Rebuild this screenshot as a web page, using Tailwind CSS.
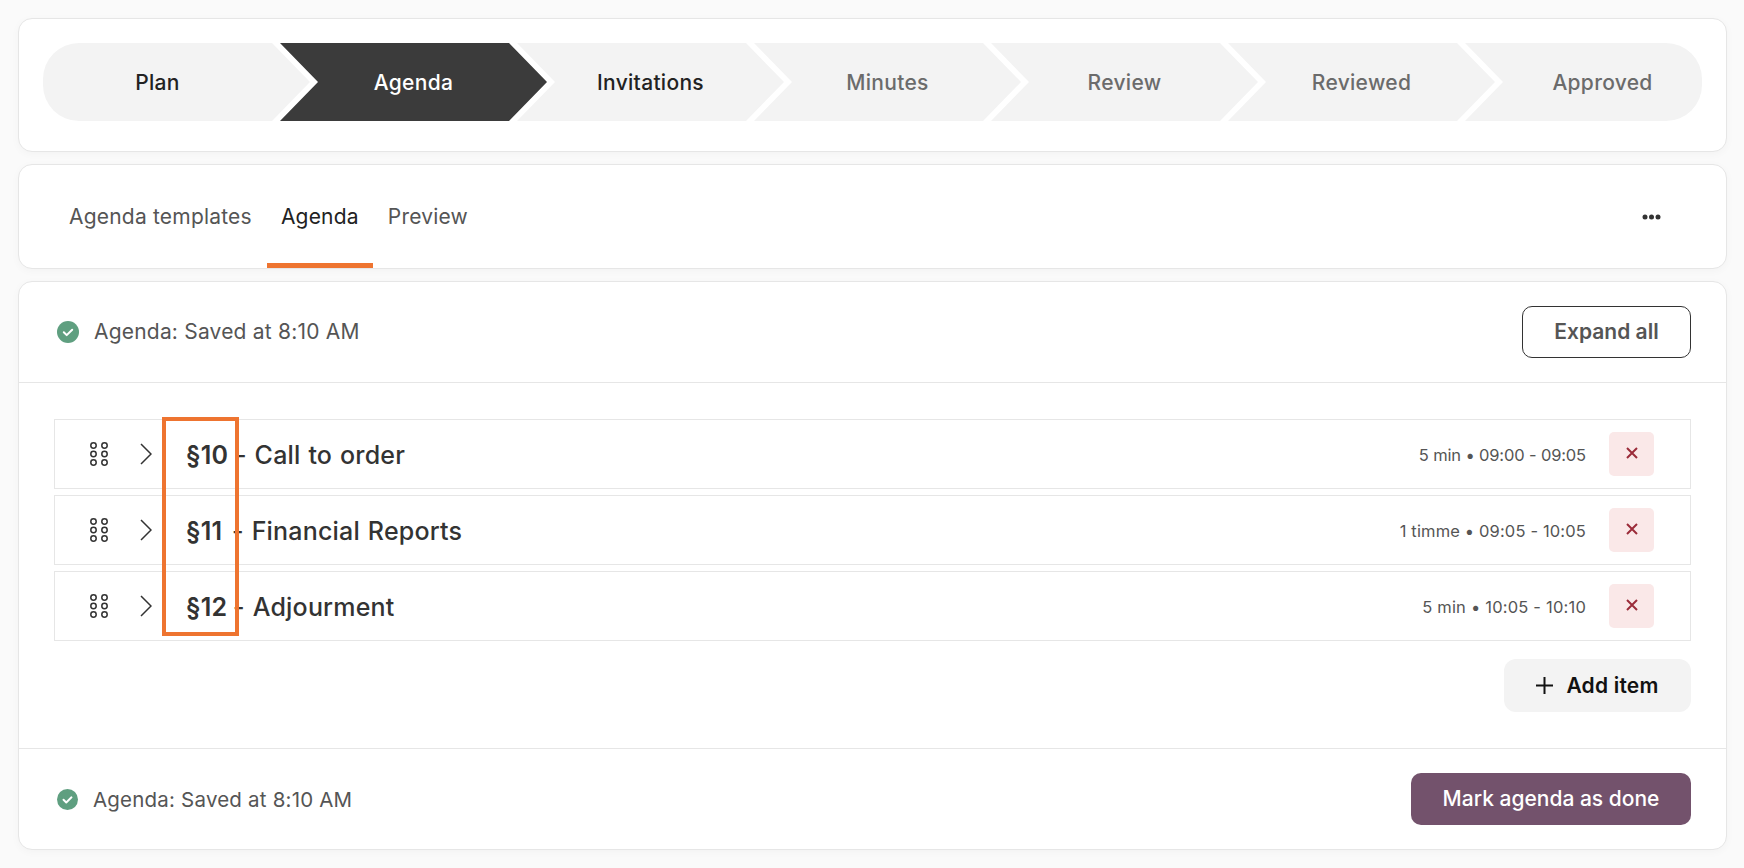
<!DOCTYPE html>
<html lang="en">
<head>
    <meta charset="UTF-8">
    <title>Agenda</title>
    <script src="https://cdn.jsdelivr.net/npm/@tailwindcss/browser@4"></script>
</head>
<body class="bg-[#fafafa] h-[868px] overflow-hidden font-['Inter',sans-serif] text-[#333]">
    <div class="flex flex-col gap-3 pl-[18px] pr-[17px] pt-[18px]">

        <!-- stepper -->
        <div class="bg-white border border-[#e6e6e6] rounded-[14px] shadow-[0_2px_8px_rgba(0,0,0,0.03)] pt-6 pb-[30px] px-6">
            <div class="flex h-[78px] rounded-[36px] overflow-hidden text-[21px] tracking-[0.3px] font-medium">
                <div class="w-[267px] shrink-0 pr-[38px] pt-[2px] flex items-center justify-center bg-[#f3f3f3] text-[#222] [clip-path:polygon(0_0,calc(100%-38px)_0,100%_50%,calc(100%-38px)_100%,0_100%)]">Plan</div>
                <div class="w-[267px] shrink-0 -ml-[30px] pt-[2px] flex items-center justify-center bg-[#3b3b3b] text-white [clip-path:polygon(0_0,calc(100%-38px)_0,100%_50%,calc(100%-38px)_100%,0_100%,38px_50%)]">Agenda</div>
                <div class="w-[267px] shrink-0 -ml-[30px] pt-[2px] flex items-center justify-center bg-[#f3f3f3] text-[#222] [clip-path:polygon(0_0,calc(100%-38px)_0,100%_50%,calc(100%-38px)_100%,0_100%,38px_50%)]">Invitations</div>
                <div class="w-[267px] shrink-0 -ml-[30px] pt-[2px] flex items-center justify-center bg-[#f3f3f3] text-[#6b6b6b] [clip-path:polygon(0_0,calc(100%-38px)_0,100%_50%,calc(100%-38px)_100%,0_100%,38px_50%)]">Minutes</div>
                <div class="w-[267px] shrink-0 -ml-[30px] pt-[2px] flex items-center justify-center bg-[#f3f3f3] text-[#6b6b6b] [clip-path:polygon(0_0,calc(100%-38px)_0,100%_50%,calc(100%-38px)_100%,0_100%,38px_50%)]">Review</div>
                <div class="w-[267px] shrink-0 -ml-[30px] pt-[2px] flex items-center justify-center bg-[#f3f3f3] text-[#6b6b6b] [clip-path:polygon(0_0,calc(100%-38px)_0,100%_50%,calc(100%-38px)_100%,0_100%,38px_50%)]">Reviewed</div>
                <div class="flex-1 -ml-[30px] pl-[38px] pt-[2px] flex items-center justify-center bg-[#f3f3f3] text-[#6b6b6b] [clip-path:polygon(0_0,100%_0,100%_100%,0_100%,38px_50%)]">Approved</div>
            </div>
        </div>

        <!-- tabs -->
        <div class="bg-white border border-[#e6e6e6] rounded-[14px] shadow-[0_2px_8px_rgba(0,0,0,0.03)] h-[105px] pl-[35px] pr-[65px] flex justify-between items-center text-[21px] tracking-[0.2px] text-[#555]">
            <div class="flex h-full">
                <div class="px-[15px] pt-[5px] flex items-center border-b-[5px] border-transparent">Agenda templates</div>
                <div class="w-[106px] pt-[5px] flex items-center justify-center border-b-[5px] border-[#ee7430] text-[#222]">Agenda</div>
                <div class="px-[15px] pt-[5px] flex items-center border-b-[5px] border-transparent">Preview</div>
            </div>
            <svg width="19" height="6" viewBox="0 0 19 6" fill="#333"><circle cx="3" cy="3" r="2.5"/><circle cx="9.5" cy="3" r="2.5"/><circle cx="16" cy="3" r="2.5"/></svg>
        </div>

        <!-- agenda -->
        <div class="bg-white border border-[#e6e6e6] rounded-[14px] shadow-[0_2px_8px_rgba(0,0,0,0.03)]">
            <div class="h-[101px] px-[35px] border-b border-[#e6e6e6] flex items-center justify-between">
                <div class="flex items-center gap-[15px] pl-[3px] text-[21px] tracking-[0.2px] text-[#555]">
                    <svg width="22" height="22" viewBox="0 0 22 22"><circle cx="11" cy="11" r="11" fill="#5f9f80"/><path d="M6.8 11.3l2.9 2.8 5.5-5.4" fill="none" stroke="#fff" stroke-width="2" stroke-linecap="round" stroke-linejoin="round"/></svg>
                    <span>Agenda: Saved at 8:10 AM</span>
                </div>
                <button class="w-[169px] h-[52px] border border-[#333] rounded-[10px] text-[21px] font-semibold text-[#555]">Expand all</button>
            </div>

            <div class="h-[365px] px-[35px] pt-9">
                <div class="relative flex flex-col gap-1.5">
                    <div class="h-[70px] border border-[#e6e6e6] pl-[35px] pr-[36px] flex items-center">
                        <svg class="mr-8" width="18" height="24" viewBox="0 0 18 24" fill="none" stroke="#333" stroke-width="1.5"><circle cx="3.5" cy="3.5" r="2.7"/><circle cx="14.5" cy="3.5" r="2.7"/><circle cx="3.5" cy="12" r="2.7"/><circle cx="14.5" cy="12" r="2.7"/><circle cx="3.5" cy="20.5" r="2.7"/><circle cx="14.5" cy="20.5" r="2.7"/></svg>
                        <svg class="mr-[34px]" width="12" height="22" viewBox="0 0 12 22" fill="none" stroke="#333" stroke-width="1.5"><path d="M1 1l10 10L1 21"/></svg>
                        <div class="pt-[3px] text-[25px] tracking-[0.2px] [word-spacing:1px] font-medium"><span class="font-semibold -mr-[1px]">§10</span> - Call to order</div>
                        <div class="ml-auto pt-[2px] text-[16.5px] tracking-[-0.15px] text-[#555]">5 min • 09:00 - 09:05</div>
                        <button class="ml-[23px] w-[45px] h-[44px] rounded-[5px] bg-[#fae8e8] flex items-center justify-center"><svg class="-mt-[2px]" width="12" height="12" viewBox="0 0 12 12" stroke="#9b2c3a" stroke-width="2"><path d="M1 1l10 10M11 1L1 11"/></svg></button>
                    </div>
                    <div class="h-[70px] border border-[#e6e6e6] pl-[35px] pr-[36px] flex items-center">
                        <svg class="mr-8" width="18" height="24" viewBox="0 0 18 24" fill="none" stroke="#333" stroke-width="1.5"><circle cx="3.5" cy="3.5" r="2.7"/><circle cx="14.5" cy="3.5" r="2.7"/><circle cx="3.5" cy="12" r="2.7"/><circle cx="14.5" cy="12" r="2.7"/><circle cx="3.5" cy="20.5" r="2.7"/><circle cx="14.5" cy="20.5" r="2.7"/></svg>
                        <svg class="mr-[34px]" width="12" height="22" viewBox="0 0 12 22" fill="none" stroke="#333" stroke-width="1.5"><path d="M1 1l10 10L1 21"/></svg>
                        <div class="pt-[3px] text-[25px] tracking-[0.2px] [word-spacing:1px] font-medium"><span class="font-semibold mr-[2px]">§11</span> - Financial Reports</div>
                        <div class="ml-auto pt-[2px] text-[16.5px] tracking-[0.15px] text-[#555]">1 timme • 09:05 - 10:05</div>
                        <button class="ml-[23px] w-[45px] h-[44px] rounded-[5px] bg-[#fae8e8] flex items-center justify-center"><svg class="-mt-[2px]" width="12" height="12" viewBox="0 0 12 12" stroke="#9b2c3a" stroke-width="2"><path d="M1 1l10 10M11 1L1 11"/></svg></button>
                    </div>
                    <div class="h-[70px] border border-[#e6e6e6] pl-[35px] pr-[36px] flex items-center">
                        <svg class="mr-8" width="18" height="24" viewBox="0 0 18 24" fill="none" stroke="#333" stroke-width="1.5"><circle cx="3.5" cy="3.5" r="2.7"/><circle cx="14.5" cy="3.5" r="2.7"/><circle cx="3.5" cy="12" r="2.7"/><circle cx="14.5" cy="12" r="2.7"/><circle cx="3.5" cy="20.5" r="2.7"/><circle cx="14.5" cy="20.5" r="2.7"/></svg>
                        <svg class="mr-[34px]" width="12" height="22" viewBox="0 0 12 22" fill="none" stroke="#333" stroke-width="1.5"><path d="M1 1l10 10L1 21"/></svg>
                        <div class="pt-[3px] text-[25px] tracking-[0.2px] [word-spacing:1px] font-medium"><span class="font-semibold -mr-[2px]">§12</span> - Adjourment</div>
                        <div class="ml-auto pt-[2px] text-[16.5px] tracking-[0.2px] text-[#555]">5 min • 10:05 - 10:10</div>
                        <button class="ml-[23px] w-[45px] h-[44px] rounded-[5px] bg-[#fae8e8] flex items-center justify-center"><svg class="-mt-[2px]" width="12" height="12" viewBox="0 0 12 12" stroke="#9b2c3a" stroke-width="2"><path d="M1 1l10 10M11 1L1 11"/></svg></button>
                    </div>
                    <!-- orange highlight drawn over the numbers -->
                    <div class="absolute left-[108px] -top-[2px] w-[77px] h-[219px] border-4 border-[#ee7430]"></div>
                </div>
                <div class="flex justify-end mt-[18px]">
                    <button class="w-[187px] h-[53px] rounded-[12px] bg-[#f3f3f3] flex items-center justify-center gap-[13px] text-[21px] tracking-[0.2px] font-semibold text-[#111]">
                        <svg width="17" height="17" viewBox="0 0 17 17" stroke="#111" stroke-width="2"><path d="M8.5 0v17M0 8.5h17"/></svg>
                        Add item
                    </button>
                </div>
            </div>

            <div class="h-[101px] px-[35px] border-t border-[#e6e6e6] flex items-center justify-between">
                <div class="flex items-center gap-[15px] pl-[3px] text-[20.5px] tracking-[0.2px] text-[#555]">
                    <svg width="21" height="21" viewBox="0 0 22 22"><circle cx="11" cy="11" r="11" fill="#5f9f80"/><path d="M6.8 11.3l2.9 2.8 5.5-5.4" fill="none" stroke="#fff" stroke-width="2" stroke-linecap="round" stroke-linejoin="round"/></svg>
                    <span class="pt-[2px]">Agenda: Saved at 8:10 AM</span>
                </div>
                <button class="w-[280px] h-[52px] rounded-[10px] bg-[#73526c] text-white text-[21px] font-medium">Mark agenda as done</button>
            </div>
        </div>
    </div>
</body>
</html>
